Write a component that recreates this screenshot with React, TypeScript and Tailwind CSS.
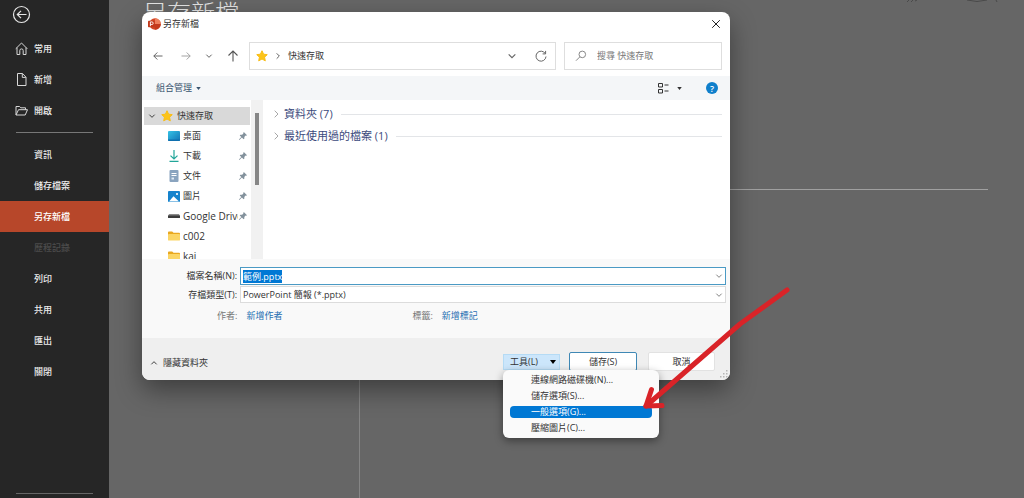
import { useEffect, useRef } from "react";
import type { ReactNode } from "react";

const FONT = "font-['Open_Sans','Noto_Sans_CJK_TC',sans-serif]";

function Chevron({ className, d = "M2 4l4 4 4-4" }: { className: string; d?: string }) {
  return (
    <svg viewBox="0 0 12 12" className={className} fill="none" stroke="currentColor" strokeWidth="1.4" aria-hidden="true">
      <path d={d} />
    </svg>
  );
}

function Caret({ className }: { className: string }) {
  return (
    <svg viewBox="0 0 6 4" className={className} fill="currentColor" aria-hidden="true">
      <path d="M0 0h6L3 4z" />
    </svg>
  );
}

function Star() {
  return (
    <svg viewBox="0 0 24 24" className="size-3 shrink-0" aria-hidden="true">
      <path
        d="M12 1.5l3.2 6.9 7.3.9-5.4 5 1.5 7.4L12 18l-6.6 3.7 1.5-7.4-5.4-5 7.3-.9z"
        fill="#fcc419"
        stroke="#f9bd14"
        strokeWidth="2"
        strokeLinejoin="round"
      />
    </svg>
  );
}

function Pin() {
  return (
    <svg viewBox="0 0 10 10" className="size-2.5 shrink-0" aria-hidden="true">
      <path d="M5.8 1l3.2 3.2-.9.5-.5-.1-1.3 1.4.1 1.6-.8.7L3.9 6.6 1.4 9l-.5-.5 2.4-2.4-1.6-1.7.7-.7 1.7.1 1.3-1.3-.1-.6z" fill="#83919c" />
    </svg>
  );
}

function DesktopIcon() {
  return (
    <svg viewBox="0 0 12 10" className="h-2.5 w-3" aria-hidden="true">
      <defs>
        <linearGradient id="desk" x1="0" y1="0" x2="1" y2="1">
          <stop offset="0" stopColor="#35c3e6" />
          <stop offset="1" stopColor="#1173b5" />
        </linearGradient>
      </defs>
      <rect width="12" height="10" rx="1" fill="url(#desk)" />
      <path d="M0 8.6h12V9a1 1 0 0 1-1 1H1a1 1 0 0 1-1-1z" fill="#0f6fae" />
    </svg>
  );
}

function DownloadIcon() {
  return (
    <svg viewBox="0 0 12 12" className="size-3" fill="none" stroke="#22a699" strokeWidth="1.2" aria-hidden="true">
      <path d="M6 0v9M2.5 5.6L6 9l3.500-3.400M1.500 11.400h9" />
    </svg>
  );
}

function DocumentIcon() {
  return (
    <svg viewBox="0 0 12 12" className="size-3" aria-hidden="true">
      <rect x="1.500" width="9" height="12" rx="1" fill="#8aa4bf" />
      <path d="M3.500 3.500h5M3.500 5.500h5" stroke="#fff" strokeWidth="1" />
      <path d="M3.500 7.500h2.500v2H3.500z" fill="#dfe9f3" />
    </svg>
  );
}

function PictureIcon() {
  return (
    <svg viewBox="0 0 12 11" className="h-[11px] w-3" aria-hidden="true">
      <rect width="12" height="11" rx="1" fill="#1583cd" />
      <path d="M1 10.500l4.500-5.200 5.500 5.200z" fill="#fff" />
      <circle cx="9" cy="3" r="1.100" fill="#fff" />
    </svg>
  );
}

function DriveIcon() {
  return (
    <svg viewBox="0 0 12 4" className="h-1 w-3" aria-hidden="true">
      <path d="M1.200 0h9.600L12 1.500H0z" fill="#8b8b8b" />
      <rect y="1.200" width="12" height="2.800" rx=".6" fill="#3c3c3c" />
    </svg>
  );
}

function FolderIcon() {
  return (
    <svg viewBox="0 0 12 10" className="h-2.5 w-3" aria-hidden="true">
      <path d="M0 1.400A.9.9 0 0 1 .9.500h3.300l1.300 1.300h5.600a.9.900 0 0 1 .9.900V5H0z" fill="#e9a820" />
      <rect y="2.900" width="12" height="6.700" rx=".9" fill="#fbd565" />
    </svg>
  );
}

type NavItem = { label: string; icon?: ReactNode; active?: boolean; disabled?: boolean };

const navTop: NavItem[] = [
  {
    label: "常用",
    icon: (
      <svg viewBox="0 0 13 13" className="size-[13px]" fill="none" stroke="#d8d8d8" aria-hidden="true">
        <path d="M.7 6.800L6.500 1l5.800 5.800M2 5.600v6.900h2.800V8.600a1.700 1.700 0 0 1 3.400 0v3.900H11V5.600" />
      </svg>
    ),
  },
  {
    label: "新增",
    icon: (
      <svg viewBox="0 0 13 13" className="size-[13px]" fill="none" stroke="#d8d8d8" aria-hidden="true">
        <path d="M2.500.500h5l3.500 3.700v8.300H2.500zM7.300.700v3.700h3.500" />
      </svg>
    ),
  },
  {
    label: "開啟",
    icon: (
      <svg viewBox="0 0 13 13" className="size-[13px]" fill="none" stroke="#d8d8d8" aria-hidden="true">
        <path d="M1 11V2.500h3.600l1.200 1.300h4.700v1.900M1 11l2.500-5.300h9L10.200 11z" />
      </svg>
    ),
  },
];

const navBottom: NavItem[] = [
  { label: "資訊" },
  { label: "儲存檔案" },
  { label: "另存新檔", active: true },
  { label: "歷程記錄", disabled: true },
  { label: "列印" },
  { label: "共用" },
  { label: "匯出" },
  { label: "關閉" },
];

function NavButton({ label, icon, active, disabled }: NavItem) {
  const tone = active
    ? "bg-[#b7472a] text-white"
    : disabled
      ? "text-[#4c4c4c]"
      : "text-[#ececec]";
  return (
    <button
      type="button"
      disabled={disabled}
      className={`flex h-[31px] w-full items-center gap-1.5 pl-[15px] text-left text-[9px] font-medium ${tone}`}
    >
      <span className="w-[13px]">{icon}</span>
      {label}
    </button>
  );
}

const places: { label: string; icon: ReactNode; pinned?: boolean }[] = [
  { label: "桌面", icon: <DesktopIcon />, pinned: true },
  { label: "下載", icon: <DownloadIcon />, pinned: true },
  { label: "文件", icon: <DocumentIcon />, pinned: true },
  { label: "圖片", icon: <PictureIcon />, pinned: true },
  { label: "Google Drive", icon: <DriveIcon />, pinned: true },
  { label: "c002", icon: <FolderIcon /> },
  { label: "kai", icon: <FolderIcon /> },
];

const toolMenu = [
  { label: "連線網路磁碟機(N)..." },
  { label: "儲存選項(S)..." },
  { label: "一般選項(G)...", active: true },
  { label: "壓縮圖片(C)..." },
];

function GroupHeader({ label }: { label: string }) {
  return (
    <button type="button" className="flex h-[22px] w-full items-center text-left text-[11px] text-[#3b4a7c]">
      <Chevron className="mr-1 size-2 text-[#a0a0a0]" d="M4 1l5 5-5 5" />
      {label}
      <span className="ml-2 h-px flex-1 bg-[#e3e5e8]" />
    </button>
  );
}

function SaveDialog() {
  const nameRef = useRef<HTMLInputElement>(null);

  useEffect(() => {
    nameRef.current?.focus({ preventScroll: true });
    nameRef.current?.select();
  }, []);

  return (
    <section
      role="dialog"
      aria-labelledby="dialog-title"
      className="absolute top-3 right-[294px] left-[142px] rounded-lg bg-white text-[9px] text-[#333] shadow-[0_10px_26px_0px_rgba(0,0,0,0.4)]"
    >
      <header className="flex h-6 items-center gap-0.5 pr-2 pl-1.5">
        <svg viewBox="0 0 13 12" className="h-3 w-[13px]" aria-hidden="true">
          <circle cx="7" cy="6" r="5.800" fill="#d24726" />
          <path d="M7 .2A5.800 5.800 0 0 1 12.800 6H7z" fill="#ee7f5c" />
          <path d="M12.800 6A5.800 5.800 0 0 1 7 11.800L6 6z" fill="#c43a1c" />
          <rect y="2.700" width="6.600" height="6.600" rx=".7" fill="#c2391b" />
          <path d="M2.400 8.200V3.900h1.500a1.250 1.250 0 0 1 0 2.600H2.400" fill="none" stroke="#fff" strokeWidth=".9" />
        </svg>
        <h2 id="dialog-title" className="flex-1 text-[9px]">
          另存新檔
        </h2>
        <button type="button" aria-label="關閉" className="grid size-3 place-items-center text-[#222]">
          <svg viewBox="0 0 10 10" className="size-2.5" fill="none" stroke="currentColor" aria-hidden="true">
            <path d="M1.200 1.200l7.600 7.600M8.800 1.200L1.200 8.800" />
          </svg>
        </button>
      </header>

      <div className="flex h-10 items-center gap-2 pr-2">
        <div className="flex w-[99px] items-center gap-3.5 pl-[11px] text-[#555]">
          <button type="button" aria-label="上一頁">
            <svg viewBox="0 0 10 10" className="size-2.5" fill="none" stroke="currentColor" strokeWidth=".9" aria-hidden="true">
              <path d="M9.500 5H.8M4.300 1.500L.8 5l3.500 3.500" />
            </svg>
          </button>
          <button type="button" aria-label="下一頁" className="ml-1 text-[#999]">
            <svg viewBox="0 0 10 10" className="size-2.5" fill="none" stroke="currentColor" strokeWidth=".9" aria-hidden="true">
              <path d="M.5 5h8.700M5.700 1.500L9.200 5 5.700 8.500" />
            </svg>
          </button>
          <button type="button" aria-label="最近的位置">
            <Chevron className="size-2" />
          </button>
          <button type="button" aria-label="上一層">
            <svg viewBox="0 0 12 12" className="size-3" fill="none" stroke="currentColor" strokeWidth="1.100" aria-hidden="true">
              <path d="M6 11.500V1M1.500 5.500L6 1l4.500 4.500" />
            </svg>
          </button>
        </div>
        <div className="flex h-7 flex-1 items-center border border-[#dedede] pr-2 pl-1.5">
          <Star />
          <Chevron className="mx-1.5 size-2 text-[#555]" d="M4 2l4 4-4 4" />
          <span className="flex-1">快速存取</span>
          <button type="button" aria-label="展開路徑" className="mr-[18px] text-[#666]">
            <Chevron className="size-2.5" />
          </button>
          <button type="button" aria-label="重新整理" className="text-[#666]">
            <svg viewBox="0 0 12 12" className="size-3" fill="none" stroke="currentColor" aria-hidden="true">
              <path d="M10.300 3.600A5 5 0 1 0 11 6.500M10.600.900v3H7.600" />
            </svg>
          </button>
        </div>
        <label className="flex h-7 w-[158px] items-center gap-2.5 border border-[#dedede] pl-2.5">
          <svg viewBox="0 0 12 12" className="size-3" fill="none" stroke="#888" aria-hidden="true">
            <circle cx="7.300" cy="4.400" r="3.300" />
            <path d="M4.900 6.800L1 10.700" />
          </svg>
          <input
            type="search"
            aria-label="搜尋"
            placeholder="搜尋 快速存取"
            className="min-w-0 flex-1 outline-none placeholder:text-[#777]"
          />
        </label>
      </div>

      <div className="flex h-6 items-center bg-[#f4f6f8] pr-3 pl-3.5">
        <button type="button" className="flex items-center gap-1 text-[#38546f]">
          組合管理
          <Caret className="h-[3px] w-[5px]" />
        </button>
        <button type="button" aria-label="變更檢視" className="mr-6 ml-auto flex items-center gap-2 text-[#333]">
          <svg viewBox="0 0 12 12" className="size-3" fill="none" stroke="currentColor" strokeWidth="1" aria-hidden="true">
            <path d="M1.500 1.500h4v3.500h-4zM1.500 7.500h4V11h-4zM7.500 3h4M7.500 9h4" />
          </svg>
          <Caret className="h-[3px] w-[5px]" />
        </button>
        <button
          type="button"
          aria-label="說明"
          className="grid size-3 place-items-center rounded-full bg-[#0f7fcb] text-[9px] leading-none font-semibold text-white"
        >
          ?
        </button>
      </div>

      <div className="flex h-[159px]">
        <nav className="w-[109px] overflow-hidden pt-1.5 pr-px pl-0.5">
          <button type="button" className="flex h-5 w-full items-center text-left">
            <span className="flex h-[18px] w-full items-center bg-[#d9d9d9] pl-1">
              <Chevron className="mr-[5px] size-2" />
              <Star />
              <span className="ml-1">快速存取</span>
            </span>
          </button>
          {places.map((p) => (
            <button key={p.label} type="button" className="flex h-5 w-full items-center pr-0.5 pl-6 text-left">
              <span className="grid w-3 shrink-0 place-items-center">{p.icon}</span>
              <span className={`ml-[3px] min-w-0 flex-1 overflow-hidden whitespace-nowrap ${/^[a-z]/i.test(p.label) ? "text-[10px]" : ""}`}>
                {p.label}
              </span>
              {p.pinned && <Pin />}
            </button>
          ))}
        </nav>
        <div className="flex w-3 justify-center bg-[#f1f1f1] pt-[13px]">
          <span className="h-[72px] w-1 bg-[#868686]" />
        </div>
        <div className="flex-1 pt-[3px] pr-2 pl-[9px]">
          <GroupHeader label="資料夾 (7)" />
          <GroupHeader label="最近使用過的檔案 (1)" />
        </div>
      </div>

      <form className="bg-[#f9f9f9] pt-2 pr-1" onSubmit={(e) => e.preventDefault()}>
        <div className="grid grid-cols-[95px_1fr] items-center gap-x-[3px] gap-y-px">
          <label htmlFor="file-name" className="text-right whitespace-nowrap">
            檔案名稱(N):
          </label>
          <div className="flex h-[18px] items-center border border-[#4b9ac4] bg-white pr-0.5">
            <input
              id="file-name"
              ref={nameRef}
              defaultValue="範例.pptx"
              className="h-full min-w-0 flex-1 pl-0.5 outline-none selection:bg-[#0078d4] selection:text-white"
            />
            <Chevron className="size-2 text-[#777]" />
          </div>
          <label htmlFor="file-type" className="text-right whitespace-nowrap">
            存檔類型(T):
          </label>
          <div className="flex h-[17px] items-center border border-[#dcdcdc] bg-white pr-0.5">
            <select id="file-type" className="h-full min-w-0 flex-1 appearance-none pl-0.5 outline-none">
              <option>PowerPoint 簡報 (*.pptx)</option>
            </select>
            <Chevron className="size-2 text-[#777]" />
          </div>
        </div>
        <div className="flex h-[35px] items-start gap-[9px] pt-1.5 pl-[75px]">
          <span className="text-[#777]">作者:</span>
          <a href="#author" className="text-[#1f6fb2]">
            新增作者
          </a>
          <span className="ml-[121px] text-[#777]">標籤:</span>
          <a href="#tags" className="text-[#1f6fb2]">
            新增標記
          </a>
        </div>
      </form>

      <footer className="relative flex h-[42px] items-start rounded-b-lg bg-[#efefef] pt-3.5 pr-[15px] pl-2">
        <button type="button" className="mt-1 flex items-center gap-[5px]">
          <Chevron className="size-2" d="M2 8l4-4 4 4" />
          隱藏資料夾
        </button>
        <div className="relative mt-0.5 ml-auto">
          <button
            type="button"
            aria-haspopup="menu"
            aria-expanded="true"
            className="flex h-4 w-[57px] items-center justify-between border border-[#b5dbf5] bg-[#cce6fb] pr-[3px] pl-1.5"
          >
            工具(L)
            <Caret className="h-1 w-1.5 text-black" />
          </button>
          <ul
            role="menu"
            className="absolute top-full left-0 z-10 w-[156px] rounded-md bg-[#fafafa] px-[7px] py-[2px] shadow-[0_3px_8px_rgba(0,0,0,0.4)]"
          >
            {toolMenu.map((m) => (
              <li key={m.label} role="none" className="flex h-4 items-center">
                <button
                  type="button"
                  role="menuitem"
                  className={`flex h-3 w-[142px] items-center rounded-sm pl-[21px] whitespace-nowrap ${m.active ? "bg-[#0078d4] text-white" : ""}`}
                >
                  {m.label}
                </button>
              </li>
            ))}
          </ul>
          <svg
            viewBox="0 0 160 130"
            className="pointer-events-none absolute top-[-70px] left-[130px] z-20 h-[130px] w-40"
            fill="none"
            stroke="#d92328"
            strokeWidth="5"
            strokeLinecap="round"
            strokeLinejoin="round"
            aria-hidden="true"
          >
            <path d="M154 6L107 40 13 122" />
            <path d="M18.500 105.500L13 122l16-.5" />
          </svg>
        </div>
        <button
          type="button"
          className="ml-[9px] h-[19px] w-[68px] rounded-xs border border-[#3f88b5] bg-white"
        >
          儲存(S)
        </button>
        <button type="button" className="ml-[11px] h-[19px] w-[67px] rounded-xs border border-[#e2e2e2] bg-white">
          取消
        </button>
        <svg viewBox="0 0 8 8" className="absolute right-0.5 bottom-0.5 size-2" fill="#b5b5b5" aria-hidden="true">
          <path d="M6 0h1.500v1.500H6zM3 3h1.500v1.500H3zM6 3h1.500v1.500H6zM0 6h1.500v1.500H0zM3 6h1.500v1.500H3zM6 6h1.500v1.500H6z" />
        </svg>
      </footer>
    </section>
  );
}

export default function App() {
  return (
    <div className={`relative flex min-h-screen overflow-hidden bg-[#666] leading-[14px] ${FONT}`}>
      <aside className="flex w-[109px] shrink-0 flex-col bg-[#262626]">
        <div className="flex h-[33px] items-start pt-[5px] pl-3">
          <button type="button" aria-label="返回">
            <svg viewBox="0 0 19 19" className="size-[19px]" fill="none" stroke="#e6e6e6" strokeWidth="1.200" aria-hidden="true">
              <circle cx="9.500" cy="9.500" r="8" />
              <path d="M14.500 9.500h-9M9 5.800L5.300 9.500 9 13.200" />
            </svg>
          </button>
        </div>
        {navTop.map((n) => (
          <NavButton key={n.label} {...n} />
        ))}
        <hr className="mx-4 my-1.5 border-[#777]" />
        {navBottom.map((n) => (
          <NavButton key={n.label} {...n} />
        ))}
        <hr className="mx-4 mt-auto mb-1 border-[#666]" />
      </aside>

      <main className="flex flex-1 flex-col pr-9 pl-[34px]">
        <h1 className="h-[62px] text-[24px] leading-[26px] font-light text-[#e4e4e4]">另存新檔</h1>
        <div className="flex flex-1">
          <div className="w-[217px] border-r border-[#858585]" />
          <div className="flex-1">
            <div className="ml-8 h-[128px] border-b border-[#a0a0a0]" />
          </div>
        </div>
        <svg viewBox="0 0 110 6" className="absolute top-0 right-2 h-1.5 w-[110px]" fill="none" stroke="#4a4a4a" strokeWidth="1" aria-hidden="true">
          <path d="M-1 0l1 2M-4 2l4-2M64 0q10 3 20 0M93 0l1 2" transform="translate(-3 0)" />
          <path d="M1 2l2-2M5 2l2-2M9 1l2-1" />
        </svg>
      </main>

      <SaveDialog />
    </div>
  );
}
